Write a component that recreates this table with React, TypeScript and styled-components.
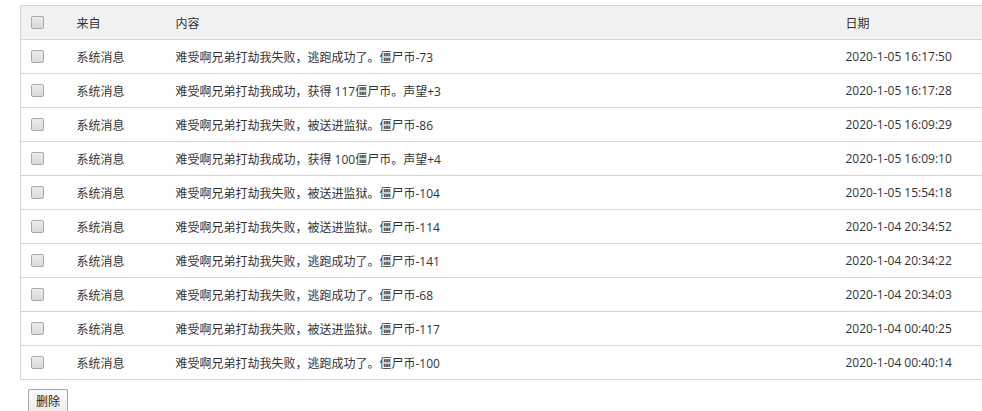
import styled, { createGlobalStyle } from "styled-components";

const GlobalStyle = createGlobalStyle`
    html, body {
        margin: 0;
        padding: 0;
        background: #fff;
        overflow: hidden;
    }
    body {
        font-family: "Open Sans", "Noto Sans CJK SC", sans-serif;
        font-size: 12px;
        color: #333;
    }
`

type Message = {
    from: string;
    content: string;
    date: string;
}

const messages: Message[] = [
    {from: "系统消息", content: "难受啊兄弟打劫我失败，逃跑成功了。僵尸币-73", date: "2020-1-05 16:17:50"},
    {from: "系统消息", content: "难受啊兄弟打劫我成功，获得 117僵尸币。声望+3", date: "2020-1-05 16:17:28"},
    {from: "系统消息", content: "难受啊兄弟打劫我失败，被送进监狱。僵尸币-86", date: "2020-1-05 16:09:29"},
    {from: "系统消息", content: "难受啊兄弟打劫我成功，获得 100僵尸币。声望+4", date: "2020-1-05 16:09:10"},
    {from: "系统消息", content: "难受啊兄弟打劫我失败，被送进监狱。僵尸币-104", date: "2020-1-05 15:54:18"},
    {from: "系统消息", content: "难受啊兄弟打劫我失败，被送进监狱。僵尸币-114", date: "2020-1-04 20:34:52"},
    {from: "系统消息", content: "难受啊兄弟打劫我失败，逃跑成功了。僵尸币-141", date: "2020-1-04 20:34:22"},
    {from: "系统消息", content: "难受啊兄弟打劫我失败，逃跑成功了。僵尸币-68", date: "2020-1-04 20:34:03"},
    {from: "系统消息", content: "难受啊兄弟打劫我失败，被送进监狱。僵尸币-117", date: "2020-1-04 00:40:25"},
    {from: "系统消息", content: "难受啊兄弟打劫我失败，逃跑成功了。僵尸币-100", date: "2020-1-04 00:40:14"},
]

export default function App() {
    return (
        <>
            <GlobalStyle/>
            <Page>
                <Table>
                    <colgroup>
                        <col width={46}/>
                        <col width={99}/>
                        <col width={670}/>
                        <col width={200}/>
                    </colgroup>
                    <thead>
                        <HeadRow>
                            <CheckCell><CheckBox/></CheckCell>
                            <Cell>来自</Cell>
                            <Cell>内容</Cell>
                            <Cell>日期</Cell>
                        </HeadRow>
                    </thead>
                    <tbody>
                        {messages.map((m, i) => (
                            <Row key={i}>
                                <CheckCell><CheckBox/></CheckCell>
                                <Cell>{m.from}</Cell>
                                <Cell>{m.content}</Cell>
                                <Cell>{m.date}</Cell>
                            </Row>
                        ))}
                    </tbody>
                </Table>
                <Actions>
                    <DeleteButton>删除</DeleteButton>
                </Actions>
            </Page>
        </>
    );
}

const Page = styled.div`
    padding: 5px 0 0 20px;
    width: 1100px;
`

const Table = styled.table`
    width: 1015px;
    table-layout: fixed;
    border-collapse: collapse;
    border-top: 1px solid #d4d4d4;
    border-left: 1px solid #d4d4d4;
`

const HeadRow = styled.tr`
    background: #f2f2f2;
    border-bottom: 1px solid #d4d4d4;
`

const Row = styled.tr`
    border-bottom: 1px solid #d4d4d4;
`

const Cell = styled.td`
    height: 34px;
    padding: 0 10px;
    box-sizing: border-box;
    white-space: nowrap;
    vertical-align: middle;
`

const CheckCell = styled(Cell)`
    padding: 0 0 0 10px;
`

const CheckBox = styled.span`
    display: block;
    width: 13px;
    height: 13px;
    box-sizing: border-box;
    border: 1px solid #a9a9a9;
    border-radius: 2px;
    background: linear-gradient(#ececec, #d9d9d9);
`

const Actions = styled.div`
    padding: 9px 0 0 8px;
`

const DeleteButton = styled.button`
    width: 40px;
    height: 24px;
    padding: 0;
    font-family: "Open Sans", "Noto Sans CJK SC", sans-serif;
    font-size: 12px;
    color: #222;
    background: linear-gradient(#fcfcfc, #ececec);
    border: 1px solid #a6a6a6;
    border-radius: 2px;
`
